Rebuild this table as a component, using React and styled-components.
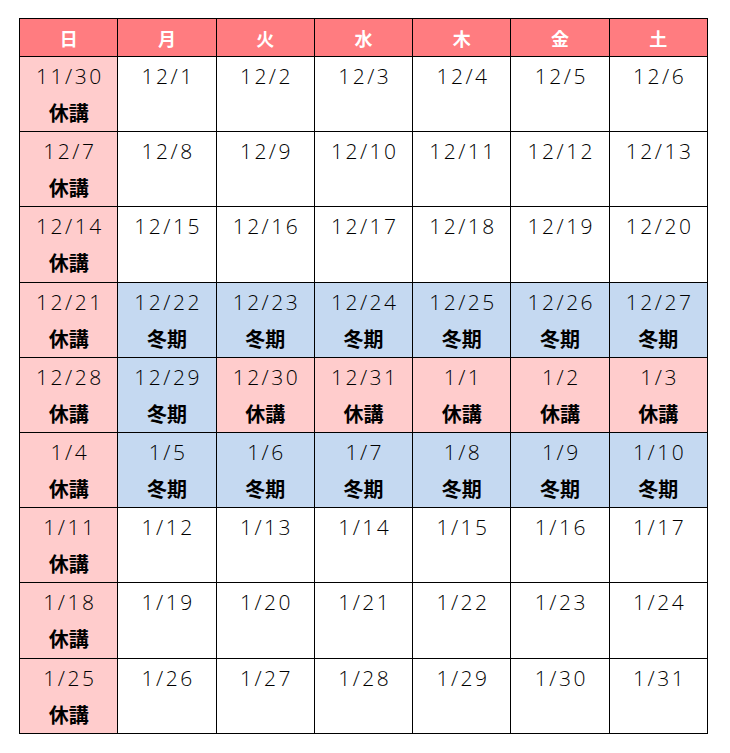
import styled, { createGlobalStyle } from "styled-components";

const GlobalStyle = createGlobalStyle`
  body {
    margin: 0;
    background: #ffffff;
    font-family: "Noto Sans CJK JP", "Noto Sans", sans-serif;
  }
`;

const HEAD = ["日", "月", "火", "水", "木", "金", "土"];

// kind: r = 休講 (pink), b = 冬期 (blue), w = plain
const WEEKS = [
  ["11/30 r", "12/1 w", "12/2 w", "12/3 w", "12/4 w", "12/5 w", "12/6 w"],
  ["12/7 r", "12/8 w", "12/9 w", "12/10 w", "12/11 w", "12/12 w", "12/13 w"],
  ["12/14 r", "12/15 w", "12/16 w", "12/17 w", "12/18 w", "12/19 w", "12/20 w"],
  ["12/21 r", "12/22 b", "12/23 b", "12/24 b", "12/25 b", "12/26 b", "12/27 b"],
  ["12/28 r", "12/29 b", "12/30 r", "12/31 r", "1/1 r", "1/2 r", "1/3 r"],
  ["1/4 r", "1/5 b", "1/6 b", "1/7 b", "1/8 b", "1/9 b", "1/10 b"],
  ["1/11 r", "1/12 w", "1/13 w", "1/14 w", "1/15 w", "1/16 w", "1/17 w"],
  ["1/18 r", "1/19 w", "1/20 w", "1/21 w", "1/22 w", "1/23 w", "1/24 w"],
  ["1/25 r", "1/26 w", "1/27 w", "1/28 w", "1/29 w", "1/30 w", "1/31 w"],
];

const LABEL = { r: "休講", b: "冬期", w: "" };
const BG = { r: "#ffcccc", b: "#c5d9f1", w: "#ffffff" };

const Page = styled.div`
  padding: 18px 0 0 19px;
`;

const Grid = styled.div`
  width: 687px;
  display: grid;
  grid-template-columns: repeat(7, 1fr);
  grid-template-rows: 37px repeat(9, 74.2px);
  gap: 1px;
  padding: 1px;
  background: #000000;
`;

const HeadCell = styled.div`
  background: #ff7c80;
  color: #ffffff;
  font-weight: 700;
  font-size: 18px;
  display: flex;
  align-items: center;
  justify-content: center;
`;

const Cell = styled.div`
  background: ${(p) => p.$bg};
  display: flex;
  flex-direction: column;
  align-items: center;
  padding-top: 6px;
`;

const Date = styled.div`
  font-family: "Open Sans", "Liberation Sans", sans-serif;
  font-size: 21px;
  font-weight: 300;
  letter-spacing: 2.5px;
  padding-left: 2.5px;
  line-height: 26px;
  color: #000000;
`;

const Label = styled.div`
  margin-top: 12px;
  font-size: 20px;
  font-weight: 700;
  line-height: 24px;
  color: #000000;
`;

const App = () => (
  <Page>
    <GlobalStyle />
    <Grid>
      {HEAD.map((h) => (
        <HeadCell key={h}>{h}</HeadCell>
      ))}
      {WEEKS.flat().map((item) => {
        const [date, kind] = item.split(" ");
        return (
          <Cell key={date} $bg={BG[kind]}>
            <Date>{date}</Date>
            {LABEL[kind] && <Label>{LABEL[kind]}</Label>}
          </Cell>
        );
      })}
    </Grid>
  </Page>
);

export default App;
